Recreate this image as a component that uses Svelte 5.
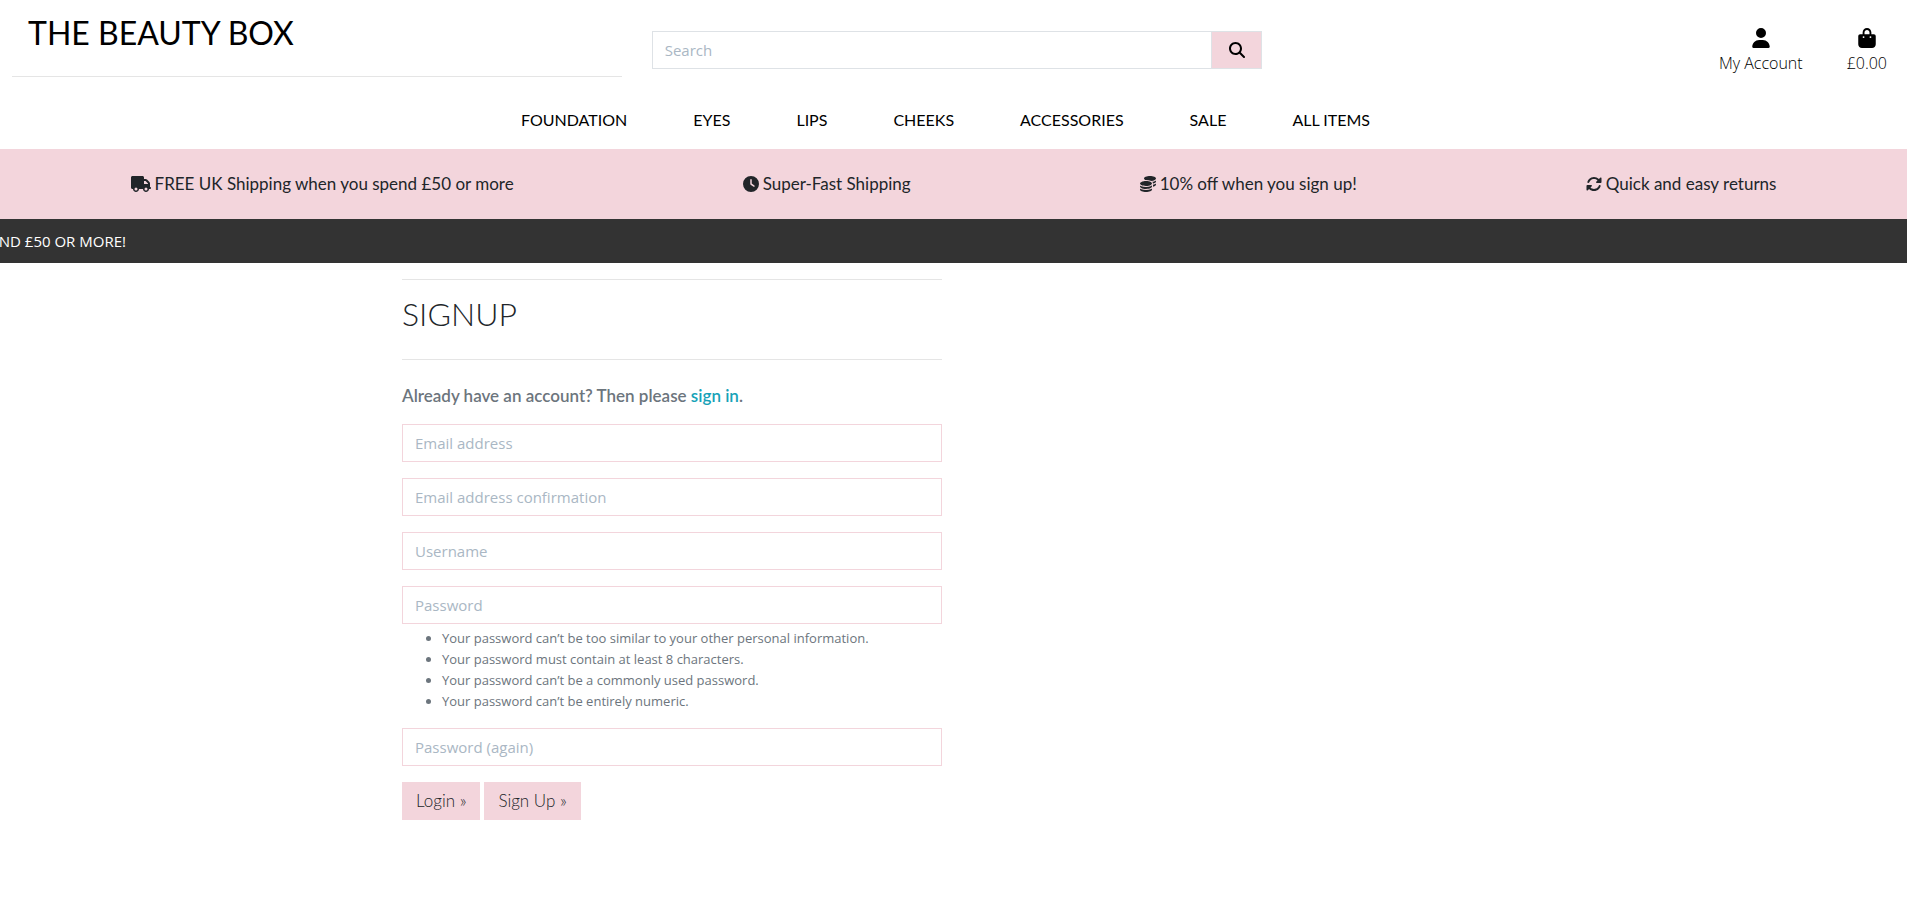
<script>
  const categories = ['FOUNDATION', 'EYES', 'LIPS', 'CHEEKS', 'ACCESSORIES', 'SALE', 'ALL ITEMS'];

  const perks = [
    {
      text: 'FREE UK Shipping when you spend £50 or more',
      width: 640,
      path: 'M48 0C21.5 0 0 21.5 0 48V368c0 26.5 21.5 48 48 48H64c0 53 43 96 96 96s96-43 96-96H384c0 53 43 96 96 96s96-43 96-96h32c17.7 0 32-14.3 32-32s-14.3-32-32-32V288 256 237.3c0-17-6.7-33.3-18.7-45.3L512 114.7c-12-12-28.3-18.7-45.3-18.7H416V48c0-26.5-21.5-48-48-48H48zM416 160h50.7L544 237.3V256H416V160zM112 416a48 48 0 1 1 96 0 48 48 0 1 1 -96 0zm368-48a48 48 0 1 1 0 96 48 48 0 1 1 0-96z'
    },
    {
      text: 'Super-Fast Shipping',
      width: 512,
      path: 'M256 0a256 256 0 1 1 0 512A256 256 0 1 1 256 0zM232 120V256c0 8 4 15.5 10.7 20l96 64c11 7.4 25.9 4.4 33.3-6.7s4.4-25.9-6.7-33.3L280 243.2V120c0-13.3-10.7-24-24-24s-24 10.7-24 24z'
    },
    {
      text: '10% off when you sign up!',
      width: 512,
      path: 'M512 80c0 18-14.3 34.6-38.4 48c-29.1 16.1-72.5 27.5-122.3 30.9c-3.7-1.8-7.4-3.5-11.3-5C300.6 137.4 248.2 128 192 128c-8.3 0-16.4 .2-24.5 .6l-1.1-.6C142.3 114.6 128 98 128 80c0-44.2 86-80 192-80S512 35.8 512 80zM160.7 161.1c10.2-.7 20.7-1.1 31.3-1.1c62.2 0 117.4 12.3 152.5 31.4C369.3 204.9 384 221.7 384 240c0 4-.7 7.9-2.1 11.7c-4.6 13.2-17 25.3-35 35.5c-.1 .1-.3 .1-.4 .2c-.3 .2-.6 .3-.9 .5c-35 19.4-90.8 32-153.6 32c-59.6 0-112.9-11.3-148.2-29.1c-1.9-.9-3.7-1.9-5.5-2.9C14.3 274.6 0 258 0 240c0-34.8 53.4-64.5 128-75.4c10.5-1.5 21.4-2.7 32.7-3.5zM416 240c0-21.9-10.6-39.9-24.1-53.4c28.3-4.4 54.2-11.4 76.2-20.5c16.3-6.8 31.5-15.2 43.9-25.5V176c0 19.3-16.5 37.1-43.8 50.9c-14.6 7.4-32.4 13.7-52.4 18.5c.1-1.8 .2-3.5 .2-5.3zm-32 96c0 18-14.3 34.6-38.4 48c-1.8 1-3.6 1.9-5.5 2.9C304.9 404.7 251.6 416 192 416c-62.8 0-118.6-12.6-153.6-32C14.3 370.6 0 354 0 336V300.6c12.5 10.3 27.6 18.7 43.9 25.5C83.4 342.6 135.8 352 192 352s108.6-9.4 148.1-25.9c7.8-3.2 15.3-6.9 22.4-10.9c6.1-3.4 11.8-7.2 17.2-11.2c1.5-1.1 2.9-2.3 4.3-3.4V304v5.7V336zm32 0V304 278.1c19-4.2 36.5-9.5 52.1-16c16.3-6.8 31.5-15.2 43.9-25.5V272c0 10.5-5 21-14.9 30.9c-16.3 16.3-45 29.7-81.3 38.4c.1-1.7 .2-3.5 .2-5.3zM192 448c56.2 0 108.6-9.4 148.1-25.9c16.3-6.8 31.5-15.2 43.9-25.5V432c0 44.2-86 80-192 80S0 476.2 0 432V396.6c12.5 10.3 27.6 18.7 43.9 25.5C83.4 438.6 135.8 448 192 448z'
    },
    {
      text: 'Quick and easy returns',
      width: 512,
      path: 'M142.9 142.9c62.2-62.2 162.7-62.5 225.3-1L327 183c-6.9 6.9-8.9 17.2-5.2 26.2s12.5 14.8 22.2 14.8H472c13.3 0 24-10.7 24-24V72c0-9.7-5.8-18.5-14.8-22.2s-19.3-1.7-26.2 5.2L413.4 96.6c-87.6-86.5-228.7-86.2-315.8 1C73.2 122 55.6 150.7 44.8 181.4c-5.9 16.7 2.9 34.9 19.5 40.8s34.9-2.9 40.8-19.5c7.7-21.8 20.2-42.3 37.8-59.8zM16 312V440c0 9.7 5.8 18.5 14.8 22.2s19.3 1.7 26.2-5.2l41.6-41.6c87.6 86.5 228.7 86.2 315.8-1c24.4-24.4 42.1-53.1 52.9-83.7c5.9-16.7-2.9-34.9-19.5-40.8s-34.9 2.9-40.8 19.5c-7.7 21.8-20.2 42.3-37.8 59.8c-62.2 62.2-162.7 62.5-225.3 1L185 329c6.9-6.9 8.9-17.2 5.2-26.2s-12.5-14.8-22.2-14.8H40c-13.3 0-24 10.7-24 24z'
    }
  ];

  const rules = [
    'Your password can’t be too similar to your other personal information.',
    'Your password must contain at least 8 characters.',
    'Your password can’t be a commonly used password.',
    'Your password can’t be entirely numeric.'
  ];
</script>

<header>
  <div class="top">
    <div class="brand">
      <a href="#home">THE BEAUTY BOX</a>
      <hr />
    </div>
    <form class="search">
      <input type="text" placeholder="Search" aria-label="Search" />
      <button type="button" aria-label="Search">
        <svg viewBox="0 0 512 512" width="16" height="16"><path d="M416 208c0 45.9-14.9 88.3-40 122.7L502.6 457.4c12.5 12.5 12.5 32.8 0 45.3s-32.8 12.5-45.3 0L330.7 376c-34.4 25.2-76.8 40-122.7 40C93.1 416 0 322.9 0 208S93.1 0 208 0S416 93.1 416 208zM208 352a144 144 0 1 0 0-288 144 144 0 1 0 0 288z" /></svg>
      </button>
    </form>
    <div class="links">
      <a href="#account">
        <svg viewBox="0 0 448 512" width="18" height="20"><path d="M224 256A128 128 0 1 0 224 0a128 128 0 1 0 0 256zm-45.7 48C79.8 304 0 383.8 0 482.3C0 498.7 13.3 512 29.7 512H418.3c16.4 0 29.7-13.3 29.7-29.7C448 383.8 368.2 304 269.7 304H178.3z" /></svg>
        <span>My Account</span>
      </a>
      <a href="#bag">
        <svg viewBox="0 0 448 512" width="18" height="20"><path d="M160 112c0-35.3 28.7-64 64-64s64 28.7 64 64v48H160V112zm-48 48H48c-26.5 0-48 21.5-48 48V416c0 53 43 96 96 96H352c53 0 96-43 96-96V208c0-26.5-21.5-48-48-48H336V112C336 50.1 285.9 0 224 0S112 50.1 112 112v48zm24 48a24 24 0 1 1 0 48 24 24 0 1 1 0-48zm152 24a24 24 0 1 1 48 0 24 24 0 1 1 -48 0z" /></svg>
        <span>£0.00</span>
      </a>
    </div>
  </div>
  <nav>
    {#each categories as category}
      <a href="#shop">{category}</a>
    {/each}
  </nav>
</header>

<section class="perks">
  {#each perks as perk}
    <div class="perk">
      <svg viewBox="0 0 {perk.width} 512" width={perk.width / 32} height="16"><path d={perk.path} /></svg>
      <span>{perk.text}</span>
    </div>
  {/each}
</section>

<div class="ticker"><span>ND £50 OR MORE!</span></div>

<main>
  <form class="signup">
    <hr />
    <h1>SIGNUP</h1>
    <hr />
    <p>Already have an account? Then please <a href="#signin">sign in</a>.</p>
    <input type="email" placeholder="Email address" aria-label="Email address" />
    <input type="email" placeholder="Email address confirmation" aria-label="Email address confirmation" />
    <input type="text" placeholder="Username" aria-label="Username" />
    <div class="password">
      <input type="password" placeholder="Password" aria-label="Password" />
      <ul>
        {#each rules as rule}
          <li>{rule}</li>
        {/each}
      </ul>
    </div>
    <input type="password" placeholder="Password (again)" aria-label="Password (again)" />
    <div class="actions">
      <button type="button">Login »</button>
      <button type="button">Sign Up »</button>
    </div>
  </form>
</main>

<style>
  :global(body) {
    margin: 0;
    background: #fff;
    color: #212529;
    font: 15px/24px 'Open Sans', sans-serif;
    overflow-x: hidden;
  }

  a {
    color: #000;
    text-decoration: none;
  }

  svg {
    display: block;
    flex: none;
    fill: currentColor;
  }

  hr {
    margin: 0;
    border: 0;
    border-top: 1px solid #e5e5e5;
  }

  input {
    box-sizing: border-box;
    width: 100%;
    height: 38px;
    padding: 6px 12px;
    border: 1px solid #f3d5dc;
    border-radius: 0;
    background: #fff;
    color: #495057;
    font: inherit;
  }

  input::placeholder {
    color: #aab7c4;
    opacity: 1;
  }

  button {
    font: inherit;
    border: 0;
    border-radius: 0;
    background: #f3d5dc;
    cursor: pointer;
  }

  .top {
    display: grid;
    grid-template-columns: repeat(3, 1fr);
    height: 100px;
  }

  .brand {
    padding: 12px 14px 0 12px;
  }

  .brand a {
    display: block;
    padding: 0 16px;
    margin-bottom: 22px;
    font: 32px/42px Lato, sans-serif;
  }

  .search {
    display: flex;
    align-items: flex-start;
    padding: 31px 9px 0 16px;
  }

  .search input {
    flex: 1;
    min-width: 0;
    border-color: #dee2e6;
  }

  .search button {
    display: grid;
    place-items: center;
    width: 50px;
    height: 38px;
    border: 1px solid #dee2e6;
    border-left: 0;
    color: #000;
  }

  .links {
    display: flex;
    justify-content: flex-end;
    align-items: flex-start;
    gap: 44px;
    padding: 28px 20px 0 0;
    font-size: 16px;
    font-weight: 300;
  }

  .links a {
    display: flex;
    flex-direction: column;
    align-items: center;
    gap: 3px;
  }

  nav {
    display: flex;
    justify-content: center;
    gap: 66px;
    padding: 8px 16px 17px 0;
    font-family: Lato, sans-serif;
    font-size: 16px;
  }

  .perks {
    display: flex;
    justify-content: space-around;
    align-items: center;
    height: 70px;
    padding: 0 16px;
    background: #f3d5dc;
    font-family: Lato, sans-serif;
    font-size: 17px;
  }

  .perk {
    display: flex;
    align-items: center;
    gap: 4px;
  }

  .ticker {
    padding: 10px 0;
    background: #333;
    color: #fff;
    font-weight: 500;
  }

  .ticker span {
    display: flex;
    justify-content: flex-end;
    width: 126px;
    white-space: nowrap;
  }

  main {
    max-width: 1103px;
    margin: 0 auto;
    padding: 16px 0;
  }

  .signup {
    display: flex;
    flex-direction: column;
    gap: 16px;
    max-width: 540px;
  }

  h1 {
    margin: 0 0 12px;
    font: 300 32px/35px Lato, sans-serif;
  }

  p {
    margin: 8px 0 0;
    color: #6c757d;
    font-family: Lato, sans-serif;
    font-size: 17px;
    font-weight: 600;
  }

  p a {
    color: #17a2b8;
  }

  ul {
    margin: 4px 0 0;
    padding-left: 40px;
    color: #6c757d;
    font-size: 13px;
    line-height: 21px;
  }

  .actions {
    display: flex;
    gap: 4px;
  }

  .actions button {
    height: 38px;
    padding: 0 14px;
    color: #212529;
    font-family: Lato, sans-serif;
    font-size: 17px;
    font-weight: 300;
  }
</style>
